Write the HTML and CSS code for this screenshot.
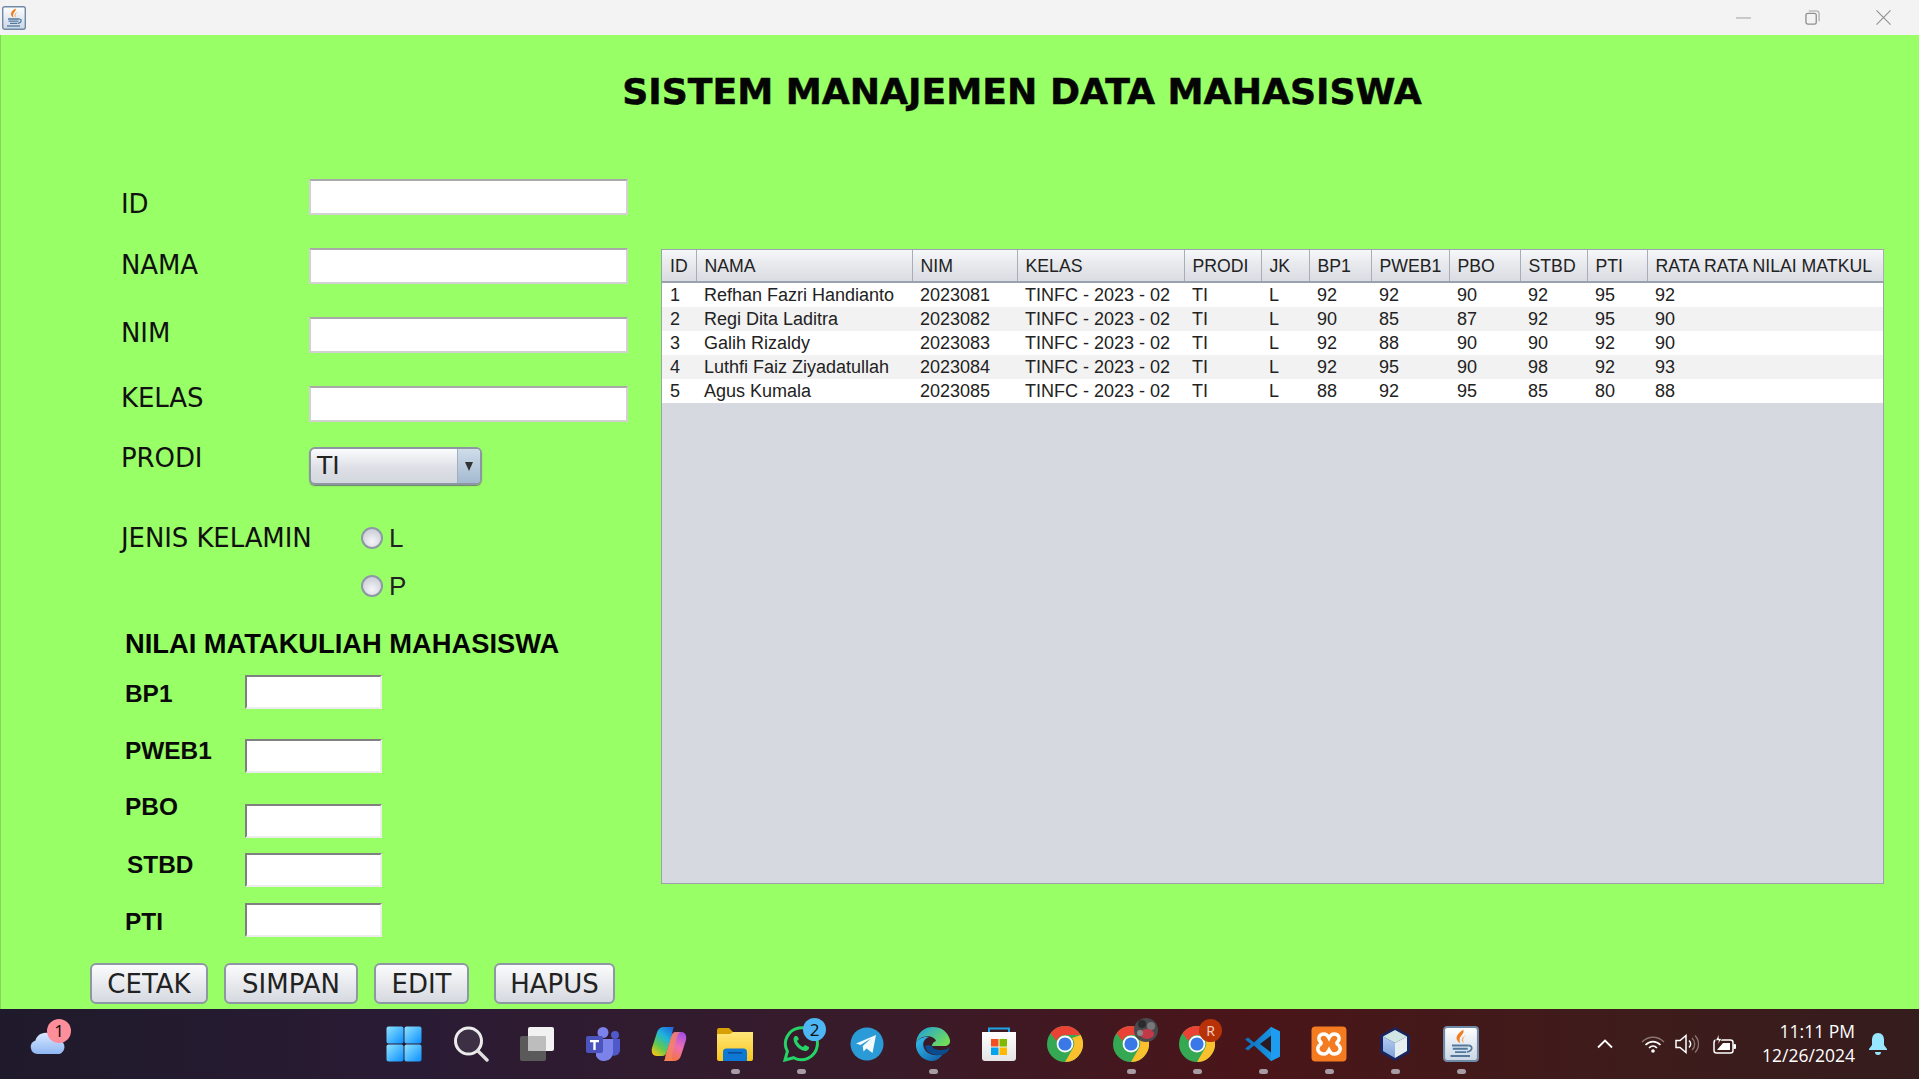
FILE: index.html
```html
<!DOCTYPE html>
<html lang="id">
<head>
<meta charset="utf-8">
<title>Sistem Manajemen Data Mahasiswa</title>
<link rel="stylesheet" href="styles.css">
</head>
<body>
<svg class="defs" width="0" height="0" aria-hidden="true">
  <defs>
    <linearGradient id="win" x1="0" y1="0" x2="1" y2="1"><stop offset="0" stop-color="#8fe3ff"/><stop offset="1" stop-color="#0a8fff"/></linearGradient>
    <linearGradient id="jav" x1="0" y1="0" x2="0" y2="1"><stop offset="0" stop-color="#ffffff"/><stop offset="1" stop-color="#c9d6e4"/></linearGradient>
    <linearGradient id="edge1" x1="0" y1="0" x2="1" y2="1"><stop offset="0" stop-color="#35c1f1"/><stop offset="1" stop-color="#0c59a4"/></linearGradient>
    <linearGradient id="edge2" x1="0" y1="0" x2="1" y2="0.6"><stop offset="0" stop-color="#1b9de2"/><stop offset="1" stop-color="#6fdc5c"/></linearGradient>
    <linearGradient id="bag" x1="0" y1="0" x2="0" y2="1"><stop offset="0" stop-color="#ffffff"/><stop offset="1" stop-color="#e4e4e4"/></linearGradient>
    <linearGradient id="cop" x1="0.7" y1="0" x2="0.4" y2="1"><stop offset="0" stop-color="#a64fe6"/><stop offset="0.5" stop-color="#ee6fb0"/><stop offset="1" stop-color="#f5733a"/></linearGradient>
    <linearGradient id="cop2" x1="0.8" y1="0" x2="0.2" y2="1"><stop offset="0" stop-color="#1f6fe0"/><stop offset="0.35" stop-color="#1fb6d8"/><stop offset="0.7" stop-color="#62c94c"/><stop offset="1" stop-color="#f5c518"/></linearGradient>
    <linearGradient id="fol" x1="0" y1="0" x2="0" y2="1"><stop offset="0" stop-color="#ffe77a"/><stop offset="1" stop-color="#f9c51e"/></linearGradient>
    <linearGradient id="vs" x1="0" y1="0" x2="1" y2="0"><stop offset="0" stop-color="#0a70bd"/><stop offset="1" stop-color="#1f9fee"/></linearGradient>
    <linearGradient id="cube" x1="0" y1="0" x2="0" y2="1"><stop offset="0" stop-color="#b4cdf0"/><stop offset="1" stop-color="#7fa2dc"/></linearGradient>
    <linearGradient id="cloud" x1="0" y1="0" x2="0" y2="1"><stop offset="0" stop-color="#d8e9ff"/><stop offset="1" stop-color="#8fb6f2"/></linearGradient>
    <symbol id="java" viewBox="0 0 24 24">
      <rect x="0.7" y="0.7" width="22.6" height="22.6" rx="2" fill="url(#jav)" stroke="#6f8aa6" stroke-width="1.4"/>
      <path d="M13.500 2.500C15 5.500 9.500 6.500 11.500 11.500 8 9.500 7.800 6 13.500 2.500z" fill="#ef7d22"/>
      <path d="M15.500 6C13.500 7.500 12.800 9 14 11.500 11.800 10 12 7.500 15.500 6z" fill="#f3a15c"/>
      <path d="M6 13h11M6.500 15.200h10M8 17.400h7.500" stroke="#52789e" stroke-width="1.300" fill="none"/>
      <path d="M17 13c3 0 3 3.500-1 4.300" stroke="#52789e" stroke-width="1.200" fill="none"/>
      <path d="M5 20h13" stroke="#52789e" stroke-width="1.300"/>
    </symbol>
    <symbol id="chrome" viewBox="0 0 36 36">
      <circle cx="18" cy="18" r="18" fill="#34a853"/>
      <path d="M18 0a18 18 0 0 1 15.600 9H18a9 9 0 0 0-8.500 6L3.500 7.200A18 18 0 0 1 18 0z" fill="#ea4335"/>
      <path d="M33.600 9A18 18 0 0 1 18 36l7.800-13.500A9 9 0 0 0 25 12z" fill="#fbc02d"/>
      <circle cx="18" cy="18" r="8.400" fill="#fff"/>
      <circle cx="18" cy="18" r="6.600" fill="#3b78e7"/>
    </symbol>
  </defs>
</svg>

<div class="window">
  <header class="titlebar">
    <svg class="app-icon"><use href="#java"/></svg>
    <div class="win-controls">
      <svg class="win-btn win-min" viewBox="0 0 16 16"><path d="M0 8.500h16" stroke="#9a9a9a" stroke-width="1" fill="none"/></svg>
      <svg class="win-btn win-max" viewBox="0 0 16 16"><rect x="1" y="3.500" width="11" height="11.500" rx="2" fill="none" stroke="#8f8f8f" stroke-width="1.400"/><path d="M4 1h8.500a2.500 2.500 0 0 1 2.500 2.500V12" fill="none" stroke="#a0a0a0" stroke-width="1.100"/></svg>
      <svg class="win-btn" viewBox="0 0 16 16"><path d="M.5.500l15 15M15.500.500l-15 15" stroke="#8f8f8f" stroke-width="1.200" fill="none"/></svg>
    </div>
  </header>

  <main class="frame">
    <h1 class="app-title">SISTEM MANAJEMEN DATA MAHASISWA</h1>

    <form class="form">
      <div class="field row-id"><label class="lbl lbl-id">ID</label><span class="input"></span></div>
      <div class="field row-nama"><label class="lbl lbl-nama">NAMA</label><span class="input"></span></div>
      <div class="field row-nim"><label class="lbl lbl-nim">NIM</label><span class="input"></span></div>
      <div class="field row-kelas"><label class="lbl lbl-kelas">KELAS</label><span class="input"></span></div>
      <div class="field row-prodi">
        <label class="lbl lbl-prodi">PRODI</label>
        <div class="combo"><span class="combo-value">TI</span><span class="combo-arrow"><i class="tri"></i></span></div>
      </div>
      <div class="gender">
        <label class="lbl lbl-jk">JENIS KELAMIN</label>
        <div class="radios">
          <div class="radio"><i class="dot"></i><span>L</span></div>
          <div class="radio"><i class="dot"></i><span>P</span></div>
        </div>
      </div>
      <h2 class="nilai-title">NILAI MATAKULIAH MAHASISWA</h2>
      <div class="score sc-bp1"><label class="slbl sl-bp1">BP1</label><span class="sinput"></span></div>
      <div class="score sc-pweb"><label class="slbl sl-pweb">PWEB1</label><span class="sinput"></span></div>
      <div class="score sc-pbo"><label class="slbl sl-pbo">PBO</label><span class="sinput"></span></div>
      <div class="score sc-stbd"><label class="slbl sl-stbd">STBD</label><span class="sinput"></span></div>
      <div class="score sc-pti"><label class="slbl sl-pti">PTI</label><span class="sinput"></span></div>
      <div class="actions">
        <button type="button" class="btn b-cetak">CETAK</button>
        <button type="button" class="btn b-simpan">SIMPAN</button>
        <button type="button" class="btn b-edit">EDIT</button>
        <button type="button" class="btn b-hapus">HAPUS</button>
      </div>
    </form>

    <section class="table-pane">
      <table class="grid">
        <colgroup>
          <col class="c1"><col class="c2"><col class="c3"><col class="c4"><col class="c5"><col class="c6"><col class="c7"><col class="c8"><col class="c9"><col class="c10"><col class="c11"><col class="c12">
        </colgroup>
        <thead>
          <tr><th>ID</th><th>NAMA</th><th>NIM</th><th>KELAS</th><th>PRODI</th><th>JK</th><th>BP1</th><th>PWEB1</th><th>PBO</th><th>STBD</th><th>PTI</th><th>RATA RATA NILAI MATKUL</th></tr>
        </thead>
        <tbody>
          <tr><td>1</td><td>Refhan Fazri Handianto</td><td>2023081</td><td>TINFC - 2023 - 02</td><td>TI</td><td>L</td><td>92</td><td>92</td><td>90</td><td>92</td><td>95</td><td>92</td></tr>
          <tr><td>2</td><td>Regi Dita Laditra</td><td>2023082</td><td>TINFC - 2023 - 02</td><td>TI</td><td>L</td><td>90</td><td>85</td><td>87</td><td>92</td><td>95</td><td>90</td></tr>
          <tr><td>3</td><td>Galih Rizaldy</td><td>2023083</td><td>TINFC - 2023 - 02</td><td>TI</td><td>L</td><td>92</td><td>88</td><td>90</td><td>90</td><td>92</td><td>90</td></tr>
          <tr><td>4</td><td>Luthfi Faiz Ziyadatullah</td><td>2023084</td><td>TINFC - 2023 - 02</td><td>TI</td><td>L</td><td>92</td><td>95</td><td>90</td><td>98</td><td>92</td><td>93</td></tr>
          <tr><td>5</td><td>Agus Kumala</td><td>2023085</td><td>TINFC - 2023 - 02</td><td>TI</td><td>L</td><td>88</td><td>92</td><td>95</td><td>85</td><td>80</td><td>88</td></tr>
        </tbody>
      </table>
    </section>
  </main>

  <footer class="taskbar">
    <div class="weather">
      <svg class="cloud" viewBox="0 0 36 22"><path d="M7 22a7 7 0 0 1-2-13.600C6 4 11 0 17 1c4 .6 7 3 8.500 6.500A7.500 7.500 0 0 1 29 22z" fill="url(#cloud)"/></svg>
      <span class="wbadge">1</span>
    </div>

    <nav class="apps">
      <div class="slot"><svg class="ico ico-win" viewBox="0 0 36 36"><rect x="0.500" y="0.500" width="17" height="17" rx="2" fill="url(#win)"/><rect x="18.500" y="0.500" width="17" height="17" rx="2" fill="url(#win)"/><rect x="0.500" y="18.500" width="17" height="17" rx="2" fill="url(#win)"/><rect x="18.500" y="18.500" width="17" height="17" rx="2" fill="url(#win)"/></svg></div>

      <div class="slot"><svg class="ico" viewBox="0 0 36 36"><circle cx="15.500" cy="15" r="13" fill="#3d3045" stroke="#ececec" stroke-width="3"/><path d="M25 25l9 9" stroke="#e0e0e0" stroke-width="3.400" stroke-linecap="round"/></svg></div>

      <div class="slot"><svg class="ico" viewBox="0 0 36 36"><rect x="1" y="10" width="26" height="25" rx="2" fill="#5a5a5a"/><rect x="9" y="1" width="26" height="24" rx="2" fill="#f2f2f2"/><rect x="9" y="10" width="18" height="15" rx="1" fill="#bdbdbd"/></svg></div>

      <div class="slot"><svg class="ico" viewBox="0 0 36 36"><circle cx="18" cy="6.500" r="5.500" fill="#7b83eb"/><circle cx="30" cy="9" r="4" fill="#5059c9"/><path d="M22 13h13v11a6 6 0 0 1-9 5z" fill="#5059c9"/><path d="M11 13h17v14a9 9 0 0 1-17 3z" fill="#7b83eb"/><rect x="1" y="10" width="17" height="17" rx="2" fill="#4b53bc"/><path d="M5 14h9v2.200h-3.300V24H8.300v-7.800H5z" fill="#fff"/></svg></div>

      <div class="slot"><svg class="ico" viewBox="0 0 36 36"><path d="M13 6H25C22 6 21 8 20 11L15 28C14 32 14 34 13 35H23C27 35 29 33 30.500 28L35 14C36 9 34 6 30 6z" fill="url(#cop)"/><path d="M23 1H13C9 1 7 3 5.500 8L1 22C0 27 2 30 6 30H11C14 30 15 28 16 25L21 8C22 4 22 2 23 1z" fill="url(#cop2)"/><path d="M25 6C22 6 21 8 20 11L15 28C14 32 14 34 13 35H23C21 34 20 32 21 28L26 11C27 8 28 6 30 6z" fill="#f5855c" opacity="0.75"/></svg></div>

      <div class="slot on"><svg class="ico" viewBox="0 0 36 36"><path d="M0 4a2 2 0 0 1 2-2h10l4 4h18a2 2 0 0 1 2 2v4H0z" fill="#d9a006"/><path d="M0 8h13l3-2h20v27a2 2 0 0 1-2 2H2a2 2 0 0 1-2-2z" fill="url(#fol)"/><path d="M6 35v-9a3.500 3.500 0 0 1 3.500-3.500h17A3.500 3.500 0 0 1 30 26v9z" fill="#0f78d4"/><rect x="11" y="26" width="14" height="1.600" fill="#0a4f94"/></svg></div>

      <div class="slot on"><svg class="ico" viewBox="0 0 36 36"><path d="M2 34l2.400-8.600A16 16 0 1 1 10.700 31.700z" fill="none" stroke="#25d366" stroke-width="3"/><path d="M12 10c-2 1.500-2 4.500 0 8 2.500 4 6 6.500 10 7 2.500 0 4.500-2 4-4l-4-2-2 2c-2.500-1-5-3.500-6-6l2-2-2-3z" fill="#25d366"/></svg><span class="badge blue">2</span></div>

      <div class="slot"><svg class="ico" viewBox="0 0 36 36"><circle cx="18" cy="18" r="16.500" fill="#2a9bd6"/><path d="M7 17.500l20-8.500-3.500 18-6-4.500-3 3-.8-5.500 8.300-7.500-10.500 6.500z" fill="#f4f9fc"/></svg></div>

      <div class="slot on"><svg class="ico" viewBox="0 0 36 36"><path d="M1 17C2 7 9 1 18 1c8 0 15 4.500 17 13 .6 4-2 6-6 6H17c0-3 2-4 4-5C19 9 6 8 1 17z" fill="url(#edge2)"/><path d="M1 17c3-5 9-7 13-6-5 2-7 6-5 11 2 6 11 9 19 6-3 4-6 7-11 7C8 35 0 27 1 17z" fill="url(#edge1)"/><path d="M10 20c1 7 10 11 19 8 3-1 5-4 6-7-2 2-5 3-9 3-5 0-8-1-9-4-3-1-5-1-7 0z" fill="#0b4c8f"/></svg></div>

      <div class="slot"><svg class="ico" viewBox="0 0 36 36"><path d="M8 6V2.500h20V6" fill="none" stroke="#1ea5e8" stroke-width="2"/><path d="M1 6h34v26a3 3 0 0 1-3 3H4a3 3 0 0 1-3-3z" fill="url(#bag)"/><rect x="10" y="13" width="7.500" height="7.500" fill="#f25022"/><rect x="18.500" y="13" width="7.500" height="7.500" fill="#7fba00"/><rect x="10" y="21.500" width="7.500" height="7.500" fill="#00a4ef"/><rect x="18.500" y="21.500" width="7.500" height="7.500" fill="#ffb900"/></svg></div>

      <div class="slot"><svg class="ico"><use href="#chrome"/></svg></div>

      <div class="slot on"><svg class="ico"><use href="#chrome"/></svg>
        <svg class="avatar" viewBox="0 0 24 24"><circle cx="12" cy="12" r="12" fill="#4a4a4e"/><circle cx="8" cy="6" r="4" fill="#2b2b2e"/><circle cx="17" cy="8" r="4" fill="#77777c"/><ellipse cx="13" cy="16" rx="7" ry="5" fill="#c23a48"/><circle cx="6" cy="15" r="3" fill="#8a8a8e"/></svg>
      </div>

      <div class="slot on"><svg class="ico"><use href="#chrome"/></svg><span class="badge red">R</span></div>

      <div class="slot on"><svg class="ico" viewBox="0 0 36 36"><path d="M26 1l9 4.500v25L26 35 9 19.500 3 24.500 0 22.500 6 18 0 13.500l3-2 6 5z" fill="url(#vs)"/><path d="M26 9.500L15 18l11 8.500z" fill="#2b1a22"/><path d="M26 1l9 4.500v25L26 35z" fill="#1e9cf0"/></svg></div>

      <div class="slot on"><svg class="ico" viewBox="0 0 36 36"><rect x="0.500" y="0.500" width="35" height="35" rx="4" fill="#f47b20"/><path d="M13 8c-5 0-7 5-3 8.500 1 1-1 2-2 3-3 4 0 8.500 5 8.500 3 0 4-2 5-4 1 2 2 4 5 4 5 0 8-4.500 5-8.500-1-1-3-2-2-3 4-3.500 2-8.500-3-8.500-3 0-4 2-5 4-1-2-2-4-5-4z" fill="none" stroke="#fff" stroke-width="3.400"/></svg></div>

      <div class="slot on"><svg class="ico" viewBox="0 0 36 36"><path d="M18 1l15 8.500v17L18 35 3 26.500v-17z" fill="#1a2560"/><path d="M18 4l12 6.500L18 17 6 10.500z" fill="#cfe6e4"/><path d="M6 10.500L18 17v15L6 25z" fill="url(#cube)"/><path d="M30 10.500L18 17v15l12-7z" fill="#e6eef2"/></svg></div>

      <div class="slot on"><svg class="ico"><use href="#java"/></svg></div>
    </nav>

    <div class="tray">
      <svg class="chev" viewBox="0 0 16 10"><path d="M1 8.500L8 1.500l7 7" fill="none" stroke="#fff" stroke-width="1.800"/></svg>
      <svg class="wifi" viewBox="0 0 24 18"><path d="M1 7c6-6.500 16-6.500 22 0" fill="none" stroke="#8a7670" stroke-width="1.500"/><path d="M4.500 10c4.500-4.500 10.500-4.500 15 0M8 13c2.500-2.500 5.500-2.500 8 0" fill="none" stroke="#fff" stroke-width="1.600"/><circle cx="12" cy="16" r="1.800" fill="#fff"/></svg>
      <svg class="vol" viewBox="0 0 24 20"><path d="M1 6.500h4l6-5v17l-6-5H1z" fill="none" stroke="#fff" stroke-width="1.500"/><path d="M14 6.500a4.500 4.500 0 0 1 0 7" fill="none" stroke="#fff" stroke-width="1.500"/><path d="M17 4a8 8 0 0 1 0 12M20 1.500a12 12 0 0 1 0 17" fill="none" stroke="#8a7670" stroke-width="1.400"/></svg>
      <svg class="batt" viewBox="0 0 24 20"><rect x="1" y="6" width="19" height="13" rx="2.500" fill="none" stroke="#fff" stroke-width="1.500"/><rect x="20.500" y="10" width="2.500" height="5" rx="1" fill="#fff"/><path d="M4 16l6-7h7v7z" fill="#fff"/><path d="M6 0L2.500 6.500h3L4.500 11 9 4.500H6z" fill="#fff" stroke="#3e1c1b" stroke-width="0.800"/></svg>
      <div class="clock"><span>11:11 PM</span><span>12/26/2024</span></div>
      <svg class="bell" viewBox="0 0 20 24"><path d="M10 1c-4 0-6 3-6 7v5l-3 4v1h18v-1l-3-4V8c0-4-2-7-6-7z" fill="#96e7ff"/><path d="M7 20h6a3 3 0 0 1-6 0z" fill="#96e7ff"/></svg>
    </div>
  </footer>
</div>
</body>
</html>
```
FILE: styles.css
```css
* { box-sizing: border-box; }
html, body { margin: 0; padding: 0; height: 100%; overflow: hidden; }
body { font-family: "DejaVu Sans", sans-serif; color: #111; }
.defs { display: block; height: 0; width: 0; }

.window { display: flex; flex-direction: column; height: 1079px; width: 1919px; }

/* title bar */
.titlebar { flex: 0 0 35px; background: #f3f3f3; display: flex; align-items: center; justify-content: space-between; padding: 0 28px 0 2px; }
.app-icon { width: 24px; height: 24px; display: block; }
.win-controls { display: flex; }
.win-btn { width: 15px; height: 15px; display: block; }
.win-min { margin-right: 54px; }
.win-max { margin-right: 56px; }

/* frame */
.frame { flex: 1 1 auto; min-height: 0; background: #99ff66; border-left: 1px solid #84d65c; display: grid; grid-template-columns: 660px 1223px; grid-template-rows: 144px 1fr; }
.app-title { grid-column: 1 / -1; margin: 0; padding: 34px 0 0 159px; height: 144px; text-align: center; font: 700 36.200px/46px "DejaVu Sans", sans-serif; color: #050505; -webkit-text-stroke: 0.5px #050505; }

/* form */
.form { padding-left: 120px; }
.field { display: flex; align-items: flex-start; height: 36px; margin-bottom: 33px; }
.lbl { font: 400 26px/24px "DejaVu Sans", sans-serif; letter-spacing: -0.1px; color: #111; flex: 0 0 188px; }
.input { width: 319px; height: 36px; background: #fff; border: 2px solid #d2d2d2; border-top-color: #a9a9a9; display: block; }
.lbl-id { margin-top: 13px; }
.lbl-nama { margin-top: 5px; }
.lbl-nim { margin-top: 4px; }
.lbl-kelas { margin-top: 0; }
.lbl-prodi { margin-top: -1px; }
.row-kelas { margin-bottom: 25px; }
.row-prodi { height: 38px; margin-bottom: 42px; }

.combo { width: 173px; height: 38px; border: 2px solid #8c97a3; border-radius: 6px; background: linear-gradient(#fbfcfd, #dde0e6 55%, #d3d7de); display: flex; overflow: hidden; box-shadow: 0 1px 1px #6f7f70; }
.combo-value { flex: 1; font: 400 25px/34px "DejaVu Sans", sans-serif; padding-left: 6px; color: #222; }
.combo-arrow { flex: 0 0 23px; background: linear-gradient(#cfdcea, #a4bad0); border-left: 1px solid #9fb0c2; display: flex; align-items: center; justify-content: center; }
.tri { width: 0; height: 0; border-left: 4.500px solid transparent; border-right: 4.500px solid transparent; border-top: 9px solid #333; }

.gender { display: flex; align-items: flex-start; height: 70px; }
.lbl-jk { flex: 0 0 240px; margin-top: -1px; }
.radios { display: flex; flex-direction: column; gap: 26px; }
.radio { display: flex; align-items: center; height: 22px; gap: 6px; font: 400 26px/22px "Liberation Sans", sans-serif; color: #222; }
.dot { width: 22px; height: 22px; border-radius: 50%; background: radial-gradient(circle at 50% 70%, #f4f5f7, #cfd3da 70%); border: 2px solid #8d97a6; display: block; }

.nilai-title { margin: 32px 0 0 4px; font: 700 27.300px/30px "Liberation Sans", sans-serif; color: #050505; height: 30px; white-space: nowrap; }
.score { display: flex; align-items: flex-start; height: 34px; }
.slbl { font: 700 24.400px/24px "Liberation Sans", sans-serif; color: #0a0a0a; flex: 0 0 124px; padding-left: 4px; }
.sinput { width: 137px; height: 34px; background: #fff; border: 2px solid #ededed; border-top-color: #808080; border-left-color: #808080; display: block; }
.sc-bp1 { margin-top: 16px; }
.sc-pweb { margin-top: 30px; }
.sc-pbo { margin-top: 31px; }
.sc-stbd { margin-top: 15px; }
.sc-pti { margin-top: 16px; }
.sl-bp1 { margin-top: 7px; }
.sl-pweb { margin-top: 0; }
.sl-pbo { margin-top: -9px; }
.sl-stbd { margin-top: 0; padding-left: 6px; }
.sl-pti { margin-top: 7px; }

.actions { display: flex; margin: 26px 0 0 -31px; }
.btn { height: 41px; padding: 0; border: 2px solid #8e98a4; border-radius: 6px; background: linear-gradient(#fbfcfd, #e6e8ec 55%, #d5d9e0); font: 400 26px/36px "DejaVu Sans", sans-serif; letter-spacing: 0; color: #222; }
.b-cetak { width: 118px; margin-right: 16px; }
.b-simpan { width: 134px; margin-right: 16px; }
.b-edit { width: 95px; margin-right: 25px; }
.b-hapus { width: 121px; }

/* table */
.table-pane { margin-top: 70px; height: 635px; background: #d6d9e0; border: 1px solid #9aa3ae; }
.grid { border-collapse: collapse; table-layout: fixed; width: 1221px; font-family: "Liberation Sans", sans-serif; }
.c1 { width: 34px; } .c2 { width: 216px; } .c3 { width: 105px; } .c4 { width: 167px; }
.c5 { width: 77px; } .c6 { width: 48px; } .c7 { width: 62px; } .c8 { width: 78px; }
.c9 { width: 71px; } .c10 { width: 67px; } .c11 { width: 60px; } .c12 { width: 236px; }
.grid th { height: 32px; padding: 1px 0 0 8px; font-weight: 400; font-size: 17.700px; text-align: left; color: #222; background: linear-gradient(#f6f7f9, #e6e8ec 50%, #d9dce2); border-right: 1px solid #a7aeb9; border-bottom: 2px solid #98a1ad; white-space: nowrap; overflow: hidden; }
.grid td { height: 24px; padding: 1px 0 0 8px; font-size: 18px; line-height: 23px; color: #222; background: #fff; white-space: nowrap; overflow: hidden; }
.grid tbody tr:nth-child(even) td { background: #f2f2f2; }

/* taskbar */
.taskbar { flex: 0 0 70px; position: relative; display: flex; background: linear-gradient(90deg, #1f1a2b 0%, #2a1b34 22%, #381b2a 45%, #4a1519 65%, #3e1c1b 85%, #351c1d 100%); color: #fff; }
.weather { width: 372px; flex: 0 0 372px; position: relative; }
.cloud { width: 37px; height: 22px; margin: 23px 0 0 30px; display: block; }
.wbadge { position: absolute; left: 47px; top: 10px; width: 24px; height: 24px; border-radius: 50%; background: #ff8e9b; color: #111; font: 400 17px/24px "Noto Sans", sans-serif; text-align: center; }
.apps { display: flex; flex: 0 0 1121px; }
.slot { width: 66px; flex: 0 0 66px; position: relative; display: flex; align-items: center; justify-content: center; height: 70px; }
.ico { width: 36px; height: 36px; display: block; }
.ico-win { margin-right: 3px; }
.slot.on::after { content: ""; position: absolute; left: 29px; bottom: 5px; width: 9px; height: 5px; border-radius: 3px; background: #a79ca3; }
.badge { position: absolute; left: 35px; top: 9px; width: 23px; height: 23px; border-radius: 50%; font: 400 17px/23px "Noto Sans", sans-serif; text-align: center; }
.badge.blue { background: #4db7f5; color: #111; }
.badge.red { background: #b83208; color: #f3c9b8; font-size: 14px; top: 10px; }
.avatar { position: absolute; left: 36px; top: 9px; width: 24px; height: 24px; }
.tray { flex: 1; position: relative; display: flex; align-items: center; }
.chev { width: 16px; height: 10px; margin-left: 103px; }
.wifi { width: 24px; height: 18px; margin-left: 28px; }
.vol { width: 24px; height: 20px; margin-left: 10px; }
.batt { width: 24px; height: 20px; margin-left: 14px; }
.clock { display: flex; flex-direction: column; align-items: flex-end; width: 122px; font: 400 17.500px/24px "Open Sans", sans-serif; color: #fff; margin: -2px 0 0 -4px; }
.bell { width: 20px; height: 24px; margin-left: 13px; }
```
